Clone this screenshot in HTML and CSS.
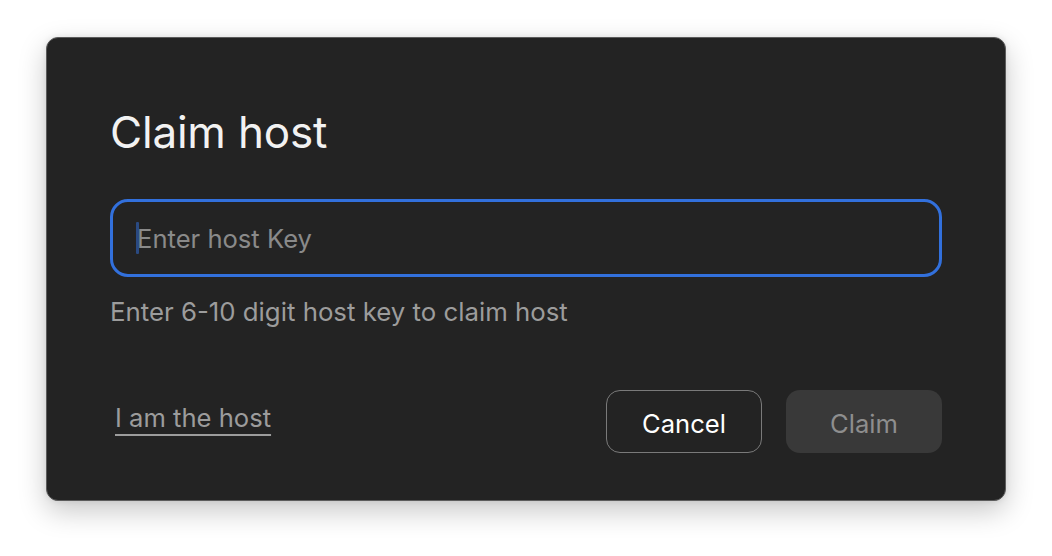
FILE: index.html
```html
<!DOCTYPE html>
<html>
<head>
<meta charset="utf-8">
<link rel="stylesheet" href="styles.css">
</head>
<body>
<div class="dialog">
  <h1 class="title">Claim host</h1>
  <div class="field">
    <span class="caret"></span>
    <span class="placeholder">Enter host Key</span>
  </div>
  <p class="hint">Enter 6-10 digit host key to claim host</p>
  <div class="footer">
    <a class="link">I am the host</a>
    <div class="actions">
      <button class="btn btn-cancel">Cancel</button>
      <button class="btn btn-claim">Claim</button>
    </div>
  </div>
</div>
</body>
</html>
```

FILE: styles.css
```css
html, body {
  margin: 0;
  padding: 0;
  background: #ffffff;
}
body {
  padding: 37px 46px;
  font-family: Inter, "Liberation Sans", sans-serif;
}
.dialog {
  box-sizing: border-box;
  width: 960px;
  height: 464px;
  background: #232323;
  border: 1px solid #5c5c5c;
  border-radius: 12px;
  box-shadow: 0 10px 28px rgba(0, 0, 0, 0.22), 0 0 6px rgba(0, 0, 0, 0.08);
  padding: 68px 63px 0 63px;
  display: flex;
  flex-direction: column;
}
.title {
  margin: 0;
  font-size: 44px;
  line-height: 52px;
  font-weight: 400;
  color: #f2f2f2;
  letter-spacing: -0.2px;
}
.field {
  box-sizing: border-box;
  margin-top: 41px;
  height: 78px;
  border: 3px solid #3270dc;
  border-radius: 18px;
  display: flex;
  align-items: center;
  padding-left: 23px;
}
.caret {
  width: 3px;
  height: 32px;
  background: #2a4a82;
  border-radius: 1px;
  margin-right: -2px;
}
.placeholder {
  font-size: 25.6px;
  color: #8a8a8a;
}
.hint {
  margin: 19px 0 0 0;
  font-size: 25.8px;
  line-height: 32px;
  color: #9c9c9c;
}
.footer {
  margin-top: 62px;
  display: flex;
  align-items: center;
  justify-content: space-between;
}
.link {
  margin-left: 5px;
  font-size: 25.6px;
  color: #9c9c9c;
  text-decoration: underline;
  text-underline-offset: 7px;
  text-decoration-thickness: 2px;
  margin-top: -9px;
}
.actions {
  display: flex;
  gap: 24px;
}
.btn {
  box-sizing: border-box;
  width: 156px;
  height: 63px;
  border-radius: 14px;
  font-family: Inter, "Liberation Sans", sans-serif;
  font-size: 25.6px;
  padding: 4px 0 0 0;
}
.btn-cancel {
  background: transparent;
  border: 1.5px solid #7a7a7a;
  color: #ffffff;
}
.btn-claim {
  background: #393939;
  border: none;
  color: #8e8e8e;
}
```
